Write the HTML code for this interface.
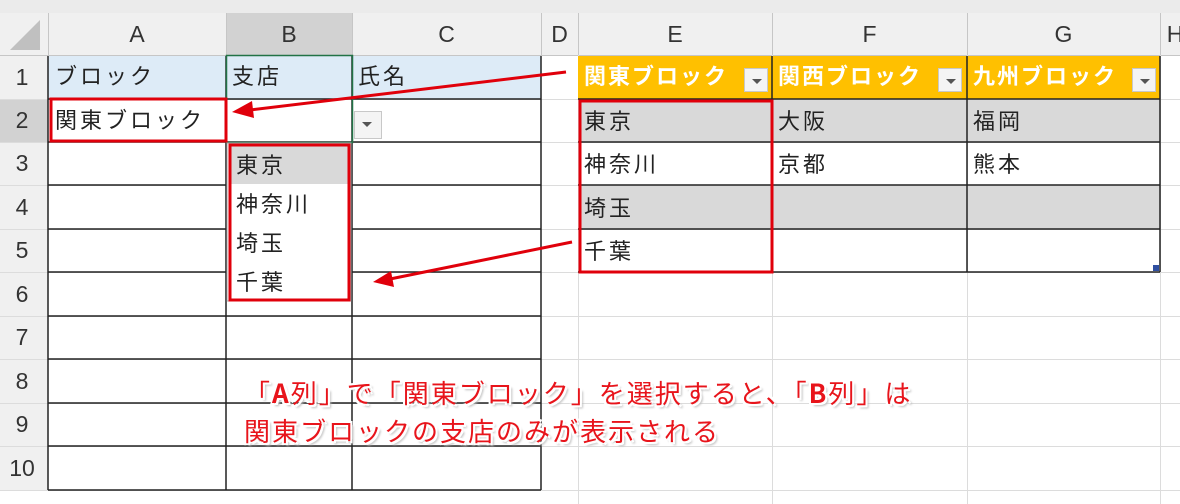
<!DOCTYPE html>
<html><head><meta charset="utf-8"><style>
*{margin:0;padding:0;box-sizing:border-box}
body{width:1180px;height:504px;overflow:hidden;background:#fff;position:relative;font-family:"Liberation Sans","Noto Sans CJK JP",sans-serif;}
.a{position:absolute}
.t{position:absolute;font-size:22px;color:#222;line-height:1;font-family:"Noto Sans CJK JP",sans-serif;letter-spacing:3px;white-space:nowrap}
.h{position:absolute;font-size:23px;color:#333;text-align:center;line-height:1}
.fb{position:absolute;width:24px;height:24px;background:#f4f4f4;border:1px solid #c8c8c8}
.fb:after{content:"";position:absolute;left:7px;top:10px;border-left:5px solid transparent;border-right:5px solid transparent;border-top:5px solid #555}
.ann{position:absolute;left:244px;font-size:26px;letter-spacing:2px;color:#e8141b;font-family:"Noto Sans CJK JP",sans-serif;line-height:1;white-space:nowrap;text-shadow:2px 2px 0 #fff,-2px -2px 0 #fff,2px -2px 0 #fff,-2px 2px 0 #fff,3px 3px 2px #bbb}
</style></head><body>
<svg class="a" style="left:0;top:0" width="1180" height="504">
<rect x="0" y="0" width="1180" height="13" fill="#ebebeb"/>
<rect x="0" y="13" width="1180" height="42" fill="#f0f0f0"/>
<rect x="0" y="55" width="48" height="435" fill="#f0f0f0"/>
<rect x="226" y="13" width="126" height="42" fill="#d2d2d2"/>
<rect x="0" y="99" width="48" height="43" fill="#d2d2d2"/>
<polygon points="40,20 40,50 10,50" fill="#c0c0c0"/>
<g stroke="#c6c6c6" stroke-width="1">
<line x1="48.5" y1="13" x2="48.5" y2="55"/><line x1="226.5" y1="13" x2="226.5" y2="55"/><line x1="352.5" y1="13" x2="352.5" y2="55"/><line x1="541.5" y1="13" x2="541.5" y2="55"/><line x1="578.5" y1="13" x2="578.5" y2="55"/><line x1="772.5" y1="13" x2="772.5" y2="55"/><line x1="967.5" y1="13" x2="967.5" y2="55"/><line x1="1160.5" y1="13" x2="1160.5" y2="55"/>
<line x1="0" y1="55.5" x2="1180" y2="55.5"/>
</g>
<g stroke="#dcdcdc" stroke-width="1">
<line x1="0" y1="99.5" x2="1180" y2="99.5"/><line x1="0" y1="142.5" x2="1180" y2="142.5"/><line x1="0" y1="185.5" x2="1180" y2="185.5"/><line x1="0" y1="229.5" x2="1180" y2="229.5"/><line x1="0" y1="272.5" x2="1180" y2="272.5"/><line x1="0" y1="316.5" x2="1180" y2="316.5"/><line x1="0" y1="359.5" x2="1180" y2="359.5"/><line x1="0" y1="403.5" x2="1180" y2="403.5"/><line x1="0" y1="446.5" x2="1180" y2="446.5"/><line x1="0" y1="490.5" x2="1180" y2="490.5"/>
<line x1="578.5" y1="55" x2="578.5" y2="504"/><line x1="772.5" y1="55" x2="772.5" y2="504"/><line x1="967.5" y1="55" x2="967.5" y2="504"/><line x1="1160.5" y1="55" x2="1160.5" y2="504"/>
</g>
<rect x="48" y="56" width="493" height="43" fill="#ddebf7"/>
<g stroke="#222" stroke-width="1.5">
<line x1="48" y1="99" x2="541" y2="99"/><line x1="48" y1="142" x2="541" y2="142"/><line x1="48" y1="185" x2="541" y2="185"/><line x1="48" y1="229" x2="541" y2="229"/><line x1="48" y1="272" x2="541" y2="272"/><line x1="48" y1="316" x2="541" y2="316"/><line x1="48" y1="359" x2="541" y2="359"/><line x1="48" y1="403" x2="541" y2="403"/><line x1="48" y1="446" x2="541" y2="446"/><line x1="48" y1="490" x2="541" y2="490"/>
<line x1="48" y1="56" x2="48" y2="490"/><line x1="226" y1="56" x2="226" y2="490"/><line x1="352" y1="56" x2="352" y2="490"/><line x1="541" y1="56" x2="541" y2="490"/>
</g>
<rect x="226.5" y="55.5" width="126" height="87" fill="none" stroke="#217346" stroke-width="1.5"/>
<rect x="227" y="143" width="124" height="158" fill="#fff" stroke="#aaa"/>
<rect x="230" y="146" width="118" height="38" fill="#d9d9d9"/>
<rect x="578" y="56" width="582" height="43" fill="#ffc000"/>
<rect x="578" y="99" width="582" height="43" fill="#d9d9d9"/>
<rect x="578" y="185" width="582" height="44" fill="#d9d9d9"/>
<g stroke="#222" stroke-width="1.5">
<line x1="578" y1="99" x2="1160" y2="99"/><line x1="578" y1="142" x2="1160" y2="142"/><line x1="578" y1="185" x2="1160" y2="185"/><line x1="578" y1="229" x2="1160" y2="229"/><line x1="578" y1="272" x2="1160" y2="272"/>
<line x1="772" y1="56" x2="772" y2="272"/><line x1="967" y1="56" x2="967" y2="272"/><line x1="1160" y1="56" x2="1160" y2="272"/>
</g>
<rect x="1153" y="265" width="6" height="6" fill="#2f4fa0"/>
<g fill="none" stroke="#e0000b" stroke-width="3">
<rect x="51" y="99" width="175" height="42"/>
<rect x="230" y="145" width="119" height="155"/>
<rect x="580" y="101" width="192" height="171"/>
</g>
<g stroke="#e0000b" stroke-width="3" fill="#e0000b">
<line x1="566" y1="72" x2="250" y2="110"/>
<polygon points="232,112 252,101 254,118" stroke="none"/>
<line x1="572" y1="242" x2="390" y2="279"/>
<polygon points="373,282 391,271 394,287" stroke="none"/>
</g>
</svg>
<div class="h" style="left:48px;width:178px;top:23px">A</div>
<div class="h" style="left:226px;width:126px;top:23px">B</div>
<div class="h" style="left:352px;width:189px;top:23px">C</div>
<div class="h" style="left:541px;width:37px;top:23px">D</div>
<div class="h" style="left:578px;width:194px;top:23px">E</div>
<div class="h" style="left:772px;width:195px;top:23px">F</div>
<div class="h" style="left:967px;width:193px;top:23px">G</div>
<div class="h" style="left:1160px;width:30px;top:23px">H</div>
<div class="h" style="left:0;width:44px;top:66px">1</div>
<div class="h" style="left:0;width:44px;top:109px">2</div>
<div class="h" style="left:0;width:44px;top:152px">3</div>
<div class="h" style="left:0;width:44px;top:196px">4</div>
<div class="h" style="left:0;width:44px;top:239px">5</div>
<div class="h" style="left:0;width:44px;top:283px">6</div>
<div class="h" style="left:0;width:44px;top:326px">7</div>
<div class="h" style="left:0;width:44px;top:370px">8</div>
<div class="h" style="left:0;width:44px;top:413px">9</div>
<div class="h" style="left:0;width:44px;top:457px">10</div>
<div class="t" style="left:55px;top:64px">ブロック</div>
<div class="t" style="left:232px;top:64px">支店</div>
<div class="t" style="left:358px;top:64px">氏名</div>
<div class="t" style="left:55px;top:108px">関東ブロック</div>
<div class="fb" style="left:354px;top:111px;width:28px;height:28px"></div>
<div class="t" style="left:236px;top:153px">東京</div>
<div class="t" style="left:236px;top:192px">神奈川</div>
<div class="t" style="left:236px;top:231px">埼玉</div>
<div class="t" style="left:236px;top:270px">千葉</div>
<div class="t" style="left:584px;top:64px;color:#fff;font-weight:bold;letter-spacing:2px">関東ブロック</div>
<div class="t" style="left:778px;top:64px;color:#fff;font-weight:bold;letter-spacing:2px">関西ブロック</div>
<div class="t" style="left:973px;top:64px;color:#fff;font-weight:bold;letter-spacing:2px">九州ブロック</div>
<div class="fb" style="left:744px;top:68px"></div>
<div class="fb" style="left:938px;top:68px"></div>
<div class="fb" style="left:1132px;top:68px"></div>
<div class="t" style="left:584px;top:109px">東京</div>
<div class="t" style="left:584px;top:152px">神奈川</div>
<div class="t" style="left:584px;top:196px">埼玉</div>
<div class="t" style="left:584px;top:239px">千葉</div>
<div class="t" style="left:778px;top:109px">大阪</div>
<div class="t" style="left:778px;top:152px">京都</div>
<div class="t" style="left:973px;top:109px">福岡</div>
<div class="t" style="left:973px;top:152px">熊本</div>
<div class="ann" style="top:380px">「<b>A</b>列」で「関東ブロック」を選択すると、「<b>B</b>列」は</div>
<div class="ann" style="top:418px">関東ブロックの支店のみが表示される</div>
</body></html>
